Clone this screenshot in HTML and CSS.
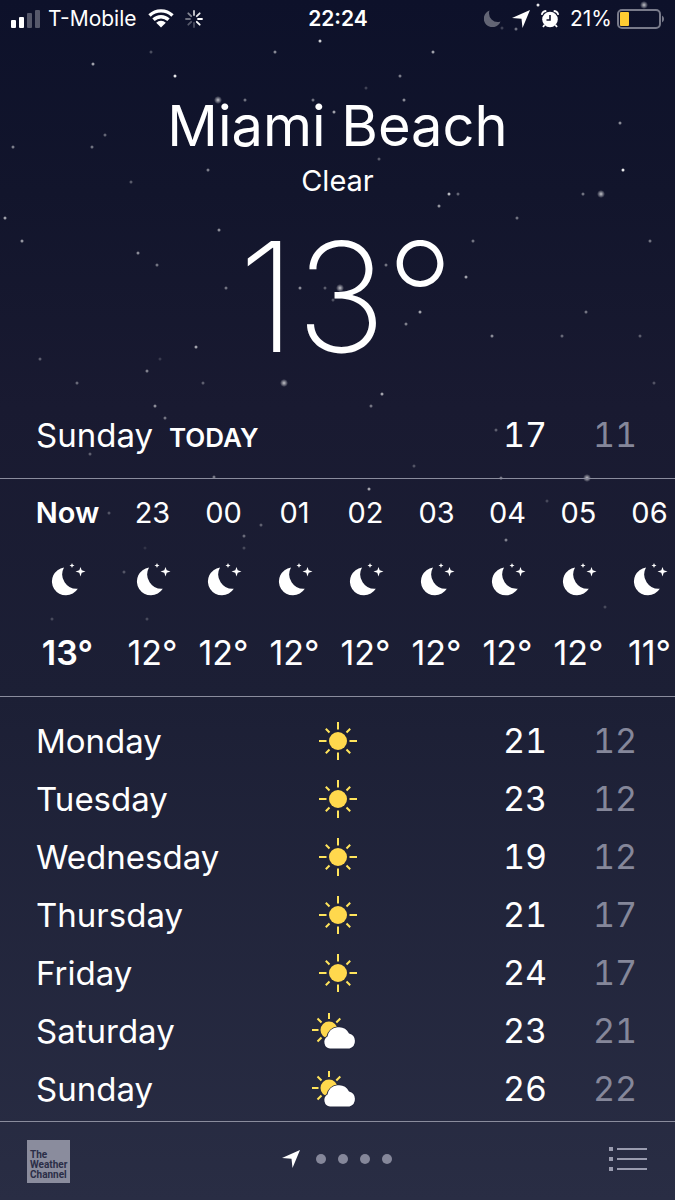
FILE: index.html
```
<!DOCTYPE html>
<html lang="en">
<head>
    <meta charset="UTF-8">
    <meta name="viewport" content="width=device-width, initial-scale=1.0">
    <title>Weather - Miami Beach</title>
    <link rel="stylesheet" href="styles.css">
</head>
<body>
    <svg class="stars" viewBox="0 0 675 640" preserveAspectRatio="xMidYMin slice" aria-hidden="true">
        <defs>
            <radialGradient id="glow">
                <stop offset="0" stop-color="#fff" stop-opacity="0.75"/>
                <stop offset="1" stop-color="#fff" stop-opacity="0"/>
            </radialGradient>
        </defs>
        <g id="starField" fill="#fff"></g>
    </svg>

    <!-- Shared icons -->
    <svg class="sprite" aria-hidden="true">
        <symbol id="night" viewBox="0 0 36 34">
            <path d="M14 4.5A14 14 0 1 0 27.800 25.800A14.500 14.500 0 0 1 14 4.500Z"/>
            <path d="M22 0L22.700 1.800L24.500 2.500L22.700 3.200L22 5L21.300 3.200L19.500 2.500L21.300 1.800Z"/>
            <path d="M30.500 4L31.700 7.300L35.500 8.500L31.700 9.700L30.500 13.500L29.300 9.700L25.500 8.500L29.300 7.300Z"/>
        </symbol>
        <symbol id="sun" viewBox="0 0 40 40">
            <circle cx="20" cy="20" r="9" fill="#ffd84d"/>
            <path d="M20 1V8.500M20 31.500V39M1 20H8.500M31.500 20H39M7.800 7.800L11.500 11.500M28.500 28.500L32.200 32.200M7.800 32.200L11.500 28.500M28.500 11.500L32.200 7.800" stroke="#ffe45c" stroke-width="2"/>
        </symbol>
        <symbol id="cloudy" viewBox="0 0 54 38">
            <circle cx="18" cy="18" r="8.500" fill="#ffd84d"/>
            <path d="M18 1V7M1 18H7.500M6.500 6.500L10.500 10.500M25.300 10.500L29.300 6.500M6.500 29.500L10.500 25.500" stroke="#ffe45c" stroke-width="2"/>
            <path d="M19 36.500A6.500 6.500 0 0 1 16.500 24.500A11.500 11.500 0 0 1 38 21.500A7.800 7.800 0 0 1 38.500 36.500Z" fill="#fff" stroke="#23263d" stroke-width="2" paint-order="stroke"/>
        </symbol>
        <symbol id="arrow" viewBox="0 0 18 18">
            <path d="M18 0L10.500 18L9.500 8.800L0 8Z"/>
        </symbol>
    </svg>

    <header class="status-bar">
        <div class="status-left">
            <svg class="signal" width="29" height="18" viewBox="0 0 29 18">
                <rect x="0" y="10" width="5" height="8" rx="1"/>
                <rect x="8" y="7" width="5" height="11" rx="1"/>
                <rect x="16" y="3" width="5" height="15" rx="1" opacity="0.3"/>
                <rect x="24" y="0" width="5" height="18" rx="1" opacity="0.3"/>
            </svg>
            <span>T-Mobile</span>
            <svg class="wifi" width="26" height="19" viewBox="0 0 26 19">
                <path d="M1.500 6.500A16.500 16.500 0 0 1 24.500 6.500M5.500 10.800A10.800 10.800 0 0 1 20.500 10.800" fill="none" stroke="#fff" stroke-width="3.400"/>
                <path d="M13 18.500L8.200 13.700A6.800 6.800 0 0 1 17.800 13.700Z"/>
            </svg>
            <svg class="spinner" width="18" height="18" viewBox="0 0 18 18" stroke="#fff" stroke-width="1.800" stroke-linecap="round">
                <path d="M9 1V5" opacity="0.8"/>
                <path d="M14.700 3.300L11.800 6.200" opacity="0.900"/>
                <path d="M17 9H13"/>
                <path d="M14.700 14.700L11.800 11.800"/>
                <path d="M9 17V13" opacity="0.25"/>
                <path d="M3.300 14.700L6.200 11.800" opacity="0.3"/>
                <path d="M1 9H5" opacity="0.4"/>
                <path d="M3.300 3.300L6.200 6.200" opacity="0.5"/>
            </svg>
        </div>
        <time class="clock">22:24</time>
        <div class="status-right">
            <svg class="dnd" width="17" height="17" viewBox="0 0 17 17">
                <path d="M5.500 0.500A8.600 8.600 0 1 0 16.500 11.500A8.700 8.700 0 0 1 5.500 0.500Z"/>
            </svg>
            <svg class="location" width="18" height="18"><use href="#arrow"/></svg>
            <svg class="alarm" width="18" height="18" viewBox="0 0 18 18">
                <circle cx="9" cy="9.500" r="7.800"/>
                <path d="M0.700 4.800A5 5 0 0 1 5.300 1M17.300 4.800A5 5 0 0 0 12.700 1M3.500 15L2 17M14.500 15L16 17" stroke="#fff" stroke-width="1.800" fill="none"/>
                <path d="M9 5V10H5.500" stroke="#11132b" stroke-width="1.600" fill="none"/>
            </svg>
            <span>21%</span>
            <svg class="battery" width="48" height="20" viewBox="0 0 48 20">
                <rect x="1" y="1" width="42" height="18" rx="4" fill="none" stroke="#787a8a" stroke-width="2"/>
                <rect x="3" y="3" width="9" height="14" rx="1" fill="#ffcc32"/>
                <path d="M45 6.500A4 4 0 0 1 45 13.500Z" fill="#787a8a"/>
            </svg>
        </div>
    </header>

    <main>
        <section class="current">
            <h1>Miami Beach</h1>
            <p class="condition">Clear</p>
            <p class="temperature">13°</p>
        </section>

        <section class="today">
            <span class="day">Sunday</span>
            <span class="label">TODAY</span>
            <span class="high">17</span>
            <span class="low">11</span>
        </section>

        <ol class="hourly" id="hourly"></ol>

        <table class="daily">
            <colgroup>
                <col class="col-day">
                <col class="col-icon">
                <col>
                <col class="col-low">
            </colgroup>
            <tbody id="daily"></tbody>
        </table>
    </main>

    <footer class="bottom-bar">
        <a href="#" class="channel">The<br>Weather<br>Channel</a>
        <nav class="pages">
            <button class="here" aria-label="Current location"><svg width="18" height="18"><use href="#arrow"/></svg></button>
            <button class="dot" aria-label="City 2"></button>
            <button class="dot" aria-label="City 3"></button>
            <button class="dot" aria-label="City 4"></button>
            <button class="dot" aria-label="City 5"></button>
        </nav>
        <button class="list-button" aria-label="City list">
            <svg width="38" height="24" viewBox="0 0 38 24">
                <path d="M0 0H4V4H0ZM0 10H4V14H0ZM0 20H4V24H0ZM8 1H38V3H8ZM8 11H38V13H8ZM8 21H38V23H8Z"/>
            </svg>
        </button>
    </footer>

    <script src="script.js"></script>
</body>
</html>
```
FILE: styles.css
```
:root {
    --text: #ffffff;
    --muted: #85879a;
    --line: #8a8c9d;
    --side: 36px;
}

* {
    margin: 0;
    padding: 0;
    box-sizing: border-box;
}

body {
    display: flex;
    flex-direction: column;
    min-height: 100vh;
    font-family: Inter, 'Liberation Sans', sans-serif;
    font-size: 34px;
    color: var(--text);
    background: linear-gradient(#0d112a 0%, #12152c 16%, #191a31 34%, #1c1f35 58%, #292d44 100%);
    overflow-x: hidden;
}

button {
    background: none;
    border: none;
    cursor: pointer;
}

svg {
    display: block;
    fill: var(--text);
}

.sprite {
    position: absolute;
    width: 0;
    height: 0;
}

.stars {
    position: absolute;
    top: 0;
    left: 0;
    width: 100%;
    z-index: -1;
}

/* Status bar */
.status-bar {
    display: grid;
    grid-template-columns: 1fr auto 1fr;
    align-items: center;
    height: 37px;
    padding: 0 10px 0 11px;
    font-size: 21px;
}

.status-left, .status-right {
    display: flex;
    align-items: center;
}

.status-left {
    gap: 8px;
}

.wifi, .spinner {
    margin-left: 3px;
}

.status-right {
    justify-content: flex-end;
    gap: 11px;
}

.status-right span {
    margin-right: -6px;
}

.dnd {
    opacity: 0.35;
}

.clock {
    font-weight: 600;
}

/* Current weather */
main {
    flex: 1;
}

.current {
    text-align: center;
    padding-top: 53px;
}

.current h1 {
    font-size: 56px;
    font-weight: 400;
    line-height: 72px;
}

.condition {
    font-size: 29px;
    line-height: 38px;
}

.temperature {
    padding: 4px 0 0 18px;
    font-size: 152px;
    font-weight: 200;
    line-height: 187px;
}

.today {
    display: flex;
    align-items: baseline;
    height: 88px;
    padding: 20px 0 0 var(--side);
    border-bottom: 1px solid var(--line);
    line-height: 48px;
}

.day, .daily th {
    font-size: 33px;
}

.label {
    font-size: 26px;
    font-weight: 600;
    margin-left: 16px;
}

.high, .low {
    font-variant-numeric: tabular-nums;
    text-align: right;
}

.high {
    margin-left: auto;
}

.low {
    color: var(--muted);
    width: 128px;
    padding-right: 38px;
}

/* Hourly strip */
.hourly {
    display: flex;
    list-style: none;
    height: 218px;
    padding: 10px 0 0 18px;
    border-bottom: 1px solid var(--line);
    overflow: hidden;
}

.hourly li {
    flex: 0 0 71px;
    display: flex;
    flex-direction: column;
    align-items: center;
}

.hourly li.now {
    flex-basis: 99px;
    font-weight: 600;
}

.hour {
    font-size: 29px;
    line-height: 48px;
}

.hourly svg {
    width: 36px;
    height: 34px;
    margin: 26px 0 32px;
}

.degrees {
    line-height: 48px;
}

/* Daily forecast */
.daily {
    width: 100%;
    margin-top: 15px;
    table-layout: fixed;
    border-collapse: collapse;
}

.col-day {
    width: 35%;
}

.col-icon {
    width: 30%;
}

.col-low {
    width: 128px;
}

.daily th {
    font-weight: 400;
    text-align: left;
    padding-left: var(--side);
}

.daily tr {
    height: 58px;
    line-height: 48px;
}

.daily svg {
    width: 40px;
    height: 40px;
    margin: 0 auto;
}

.daily svg.cloudy {
    width: 54px;
    height: 38px;
}

/* Bottom bar */
.bottom-bar {
    display: grid;
    grid-template-columns: 1fr auto 1fr;
    align-items: center;
    height: 79px;
    padding: 0 28px 4px 27px;
    border-top: 1px solid var(--line);
}

.channel {
    width: 43px;
    height: 43px;
    margin-top: 4px;
    padding: 10px 0 0 3px;
    font-family: Roboto, sans-serif;
    font-size: 10px;
    font-weight: 700;
    line-height: 10px;
    text-decoration: none;
    color: #2b2e47;
    background: #8a8c9d;
}

.pages {
    display: flex;
    align-items: center;
    gap: 12px;
}

.here {
    margin-right: 4px;
}

.dot {
    width: 10px;
    height: 10px;
    border-radius: 50%;
    background: var(--muted);
}

.list-button {
    justify-self: end;
}

.list-button svg {
    fill: #9a9caf;
}
```
FILE: script.js
```
const hours = [
    ['Now', '13°'], ['23', '12°'], ['00', '12°'], ['01', '12°'], ['02', '12°'],
    ['03', '12°'], ['04', '12°'], ['05', '12°'], ['06', '11°']
];

const days = [
    ['Monday', 'sun', 21, 12],
    ['Tuesday', 'sun', 23, 12],
    ['Wednesday', 'sun', 19, 12],
    ['Thursday', 'sun', 21, 17],
    ['Friday', 'sun', 24, 17],
    ['Saturday', 'cloudy', 23, 21],
    ['Sunday', 'cloudy', 26, 22]
];

// x, y, opacity
const stars = [
    [151, 52, 0.25], [93, 64, 0.6], [275, 52, 0.5], [175, 76, 0.9], [320, 41, 0.8],
    [245, 100, 0.4], [313, 100, 0.4], [334, 112, 0.6], [105, 135, 0.35], [92, 147, 0.4],
    [13, 147, 0.45], [208, 170, 0.45], [131, 182, 0.3], [5, 218, 0.6], [22, 241, 0.55],
    [219, 230, 0.5], [138, 253, 0.5], [157, 265, 0.4], [226, 288, 0.4], [300, 288, 0.5],
    [325, 288, 0.3], [333, 300, 0.25], [196, 347, 0.6], [40, 359, 0.3], [160, 359, 0.15],
    [147, 371, 0.45], [77, 383, 0.35], [203, 383, 0.3], [433, 52, 0.6], [400, 76, 0.45],
    [366, 88, 0.2], [404, 100, 0.5], [620, 123, 0.5], [623, 170, 0.9], [379, 159, 0.3],
    [449, 194, 0.7], [458, 194, 0.35], [583, 194, 0.4], [439, 206, 0.55], [517, 218, 0.4],
    [473, 241, 0.4], [650, 241, 0.4], [466, 277, 0.6], [386, 265, 0.4], [420, 312, 0.6],
    [406, 324, 0.45], [586, 312, 0.4], [492, 336, 0.5], [562, 336, 0.35], [640, 336, 0.3],
    [654, 383, 0.25], [382, 394, 0.6], [155, 406, 0.5], [165, 418, 0.4], [90, 454, 0.3],
    [371, 406, 0.4], [496, 430, 0.3], [414, 466, 0.25], [214, 477, 0.4], [501, 478, 0.4],
    [369, 489, 0.6], [109, 513, 0.25], [261, 525, 0.3], [244, 536, 0.35], [244, 548, 0.2],
    [547, 501, 0.2], [506, 540, 0.45], [124, 572, 0.25], [145, 548, 0.1], [605, 607, 0.2],
    [52, 619, 0.2], [147, 619, 0.2], [538, 5, 0.9], [516, 29, 0.4], [502, 28, 0.2]
];

const glows = [[218, 100], [601, 194], [340, 288], [284, 383], [587, 478], [644, 5]];

document.getElementById('hourly').innerHTML = hours.map(([hour, temp], i) => `
    <li class="${i === 0 ? 'now' : ''}">
        <span class="hour">${hour}</span>
        <svg aria-label="Clear night"><use href="#night"/></svg>
        <span class="degrees">${temp}</span>
    </li>`).join('');

document.getElementById('daily').innerHTML = days.map(([day, icon, high, low]) => `
    <tr>
        <th scope="row">${day}</th>
        <td><svg class="${icon}"><use href="#${icon}"/></svg></td>
        <td class="high">${high}</td>
        <td class="low">${low}</td>
    </tr>`).join('');

document.getElementById('starField').innerHTML =
    stars.map(([x, y, o]) => `<circle cx="${x}" cy="${y}" r="1.5" opacity="${o}"/>`).join('') +
    glows.map(([x, y]) => `<circle cx="${x}" cy="${y}" r="4" fill="url(#glow)"/>`).join('');
```
